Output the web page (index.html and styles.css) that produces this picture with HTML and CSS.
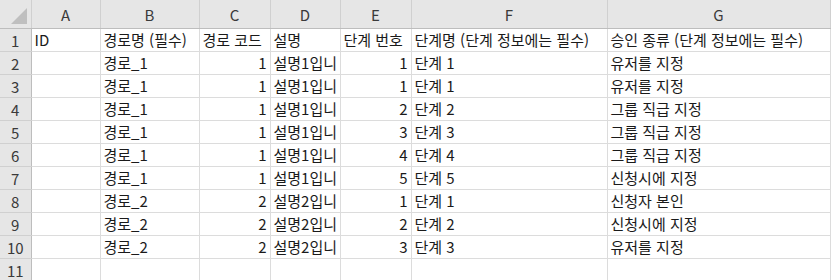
FILE: index.html
```html
<!DOCTYPE html>
<html lang="ko">
<head>
<meta charset="utf-8">
<link rel="stylesheet" href="styles.css">
</head>
<body>
<div class="sheet">
<table class="grid">
<colgroup>
<col class="c-rh"><col class="c-a"><col class="c-b"><col class="c-c"><col class="c-d"><col class="c-e"><col class="c-f"><col class="c-g">
</colgroup>
<thead>
<tr class="colhead">
<th class="corner"><span class="tri"></span></th>
<th>A</th><th>B</th><th>C</th><th>D</th><th>E</th><th>F</th><th>G</th>
</tr>
</thead>
<tbody>
<tr><th class="rh">1</th><td>ID</td><td>경로명 (필수)</td><td>경로 코드</td><td>설명</td><td>단계 번호</td><td>단계명 (단계 정보에는 필수)</td><td>승인 종류 (단계 정보에는 필수)</td></tr>
<tr><th class="rh">2</th><td></td><td>경로_1</td><td class="num">1</td><td>설명1입니</td><td class="num">1</td><td>단계 1</td><td>유저를 지정</td></tr>
<tr><th class="rh">3</th><td></td><td>경로_1</td><td class="num">1</td><td>설명1입니</td><td class="num">1</td><td>단계 1</td><td>유저를 지정</td></tr>
<tr><th class="rh">4</th><td></td><td>경로_1</td><td class="num">1</td><td>설명1입니</td><td class="num">2</td><td>단계 2</td><td>그룹 직급 지정</td></tr>
<tr><th class="rh">5</th><td></td><td>경로_1</td><td class="num">1</td><td>설명1입니</td><td class="num">3</td><td>단계 3</td><td>그룹 직급 지정</td></tr>
<tr><th class="rh">6</th><td></td><td>경로_1</td><td class="num">1</td><td>설명1입니</td><td class="num">4</td><td>단계 4</td><td>그룹 직급 지정</td></tr>
<tr><th class="rh">7</th><td></td><td>경로_1</td><td class="num">1</td><td>설명1입니</td><td class="num">5</td><td>단계 5</td><td>신청시에 지정</td></tr>
<tr><th class="rh">8</th><td></td><td>경로_2</td><td class="num">2</td><td>설명2입니</td><td class="num">1</td><td>단계 1</td><td>신청자 본인</td></tr>
<tr><th class="rh">9</th><td></td><td>경로_2</td><td class="num">2</td><td>설명2입니</td><td class="num">2</td><td>단계 2</td><td>신청시에 지정</td></tr>
<tr><th class="rh">10</th><td></td><td>경로_2</td><td class="num">2</td><td>설명2입니</td><td class="num">3</td><td>단계 3</td><td>유저를 지정</td></tr>
<tr><th class="rh">11</th><td></td><td></td><td></td><td></td><td></td><td></td><td></td></tr>
</tbody>
</table>
</div>
</body>
</html>
```
FILE: styles.css
```css
html, body {
  margin: 0;
  padding: 0;
  background: #e6e6e6;
}
.sheet {
  width: 832px;
  height: 280px;
  overflow: hidden;
  background: #ffffff;
}
.grid {
  border-collapse: collapse;
  table-layout: fixed;
  width: 830px;
  font-family: "Noto Sans CJK KR", "Noto Sans", sans-serif;
  font-size: 15px;
  color: #1a1a1a;
}
.c-rh { width: 31px; }
.c-a { width: 69px; }
.c-b { width: 99px; }
.c-c { width: 71px; }
.c-d { width: 70px; }
.c-e { width: 71px; }
.c-f { width: 196px; }
.c-g { width: 223px; }

.colhead th {
  height: 28px;
  padding: 0;
  background: #e6e6e6;
  color: #3a3a3a;
  font-weight: normal;
  font-size: 15px;
  text-align: center;
  border-right: 1px solid #d0d0d0;
  border-bottom: 1px solid #bdbdbd;
  vertical-align: middle;
}
.corner {
  position: relative;
}
.tri {
  position: absolute;
  right: 4px;
  bottom: 4px;
  width: 0;
  height: 0;
  border-left: 16px solid transparent;
  border-bottom: 16px solid #bfbfbf;
}
.rh {
  background: #e6e6e6;
  color: #3a3a3a;
  font-weight: normal;
  text-align: center;
  padding: 0;
  border-right: 1px solid #bdbdbd;
  border-bottom: 1px solid #d0d0d0;
}
tbody tr {
  height: 23px;
}
td {
  padding: 0 3px;
  height: 22px;
  line-height: 22px;
  white-space: nowrap;
  overflow: hidden;
  text-overflow: clip;
  border-right: 1px solid #dcdcdc;
  border-bottom: 1px solid #dcdcdc;
  vertical-align: middle;
}
td.num {
  text-align: right;
}
```
